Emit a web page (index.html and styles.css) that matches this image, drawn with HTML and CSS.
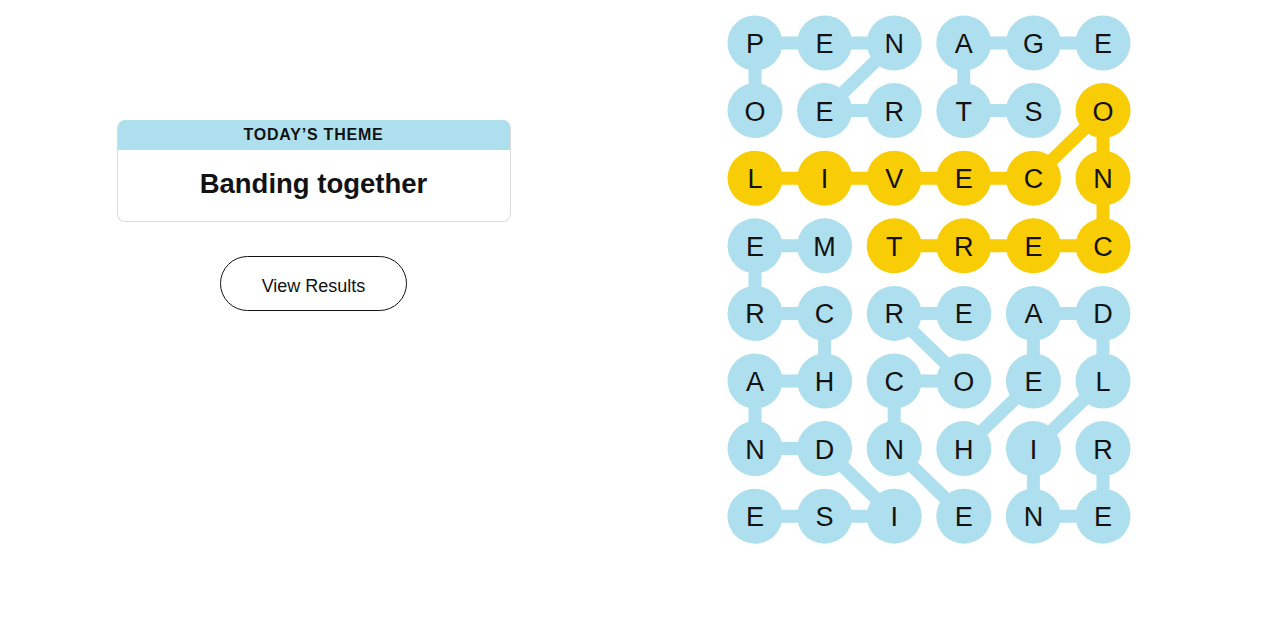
FILE: index.html
```html
<!DOCTYPE html>
<html>
<head>
    <title>Strands</title>
    <link rel="stylesheet" href="styles.css">
</head>
<body>
    <div class="game">
        <div class="sidebar">
            <div class="theme-card">
                <div class="theme-label">Today’s Theme</div>
                <div class="theme-name">Banding together</div>
            </div>
            <button class="results-btn">View Results</button>
        </div>

        <div class="board">
            <svg id="board" width="406" height="532" viewBox="0 0 406 532"></svg>
        </div>
    </div>

    <script>
        const letters = [
            "PENAGE",
            "OERTSO",
            "LIVECN",
            "EMTREC",
            "RCREAD",
            "AHCOEL",
            "NDNHIR",
            "ESIENE"
        ];

        // each word is a path of [col, row] cells
        const words = [
            { found: "theme", cells: [[0,1],[0,0],[1,0],[2,0],[1,1],[2,1]] },           // OPENER
            { found: "theme", cells: [[4,1],[3,1],[3,0],[4,0],[5,0]] },                 // STAGE
            { found: "span", cells: [[0,2],[1,2],[2,2],[3,2],[4,2],[5,1],[5,2],[5,3],[4,3],[3,3],[2,3]] }, // LIVECONCERT
            { found: "theme", cells: [[1,3],[0,3],[0,4],[1,4],[1,5],[0,5],[0,6],[1,6],[2,7],[1,7],[0,7]] }, // MERCHANDISE
            { found: "theme", cells: [[3,4],[2,4],[3,5],[2,5],[2,6],[3,7]] },           // ENCORE
            { found: "theme", cells: [[3,6],[4,5],[4,4],[5,4],[5,5],[4,6],[4,7],[5,7],[5,6]] } // HEADLINER
        ];

        const colX = i => 28 + i * 69.6;
        const rowY = j => 28 + j * 67.6;
        const svg = document.getElementById('board');
        const ns = 'http://www.w3.org/2000/svg';
        const cellState = {};

        words.forEach(function (word) {
            const line = document.createElementNS(ns, 'polyline');
            line.setAttribute('points', word.cells.map(c => colX(c[0]) + ',' + rowY(c[1])).join(' '));
            line.setAttribute('class', 'link ' + word.found);
            svg.appendChild(line);
            word.cells.forEach(c => cellState[c[0] + '-' + c[1]] = word.found);
        });

        letters.forEach(function (row, j) {
            row.split('').forEach(function (ch, i) {
                const dot = document.createElementNS(ns, 'circle');
                dot.setAttribute('cx', colX(i));
                dot.setAttribute('cy', rowY(j));
                dot.setAttribute('r', 27.5);
                dot.setAttribute('class', 'dot ' + (cellState[i + '-' + j] || ''));
                svg.appendChild(dot);

                const txt = document.createElementNS(ns, 'text');
                txt.setAttribute('x', colX(i));
                txt.setAttribute('y', rowY(j) + 10);
                txt.setAttribute('class', 'letter');
                txt.textContent = ch;
                svg.appendChild(txt);
            });
        });
    </script>
</body>
</html>
```

FILE: styles.css
```css
body {
    margin: 0;
    background: #fff;
    font-family: "Liberation Sans", Arial, sans-serif;
    color: #121212;
}

.game {
    display: flex;
}

.sidebar {
    width: 627px;
    display: flex;
    flex-direction: column;
    align-items: center;
    padding-top: 120px;
}

.theme-card {
    width: 392px;
    border: 1px solid #dcdcdc;
    border-top: none;
    border-radius: 8px;
    overflow: hidden;
    text-align: center;
}

.theme-label {
    background: #aedfee;
    height: 30px;
    line-height: 30px;
    font-size: 16px;
    font-weight: bold;
    text-transform: uppercase;
    letter-spacing: 0.8px;
}

.theme-name {
    height: 71px;
    line-height: 68px;
    font-size: 27.5px;
    font-weight: bold;
}

.results-btn {
    margin-top: 34px;
    width: 187px;
    height: 55px;
    padding-top: 6px;
    border: 1px solid #121212;
    border-radius: 28px;
    background: #fff;
    font-family: "Liberation Sans", Arial, sans-serif;
    font-size: 18px;
    color: #121212;
    cursor: pointer;
}

.board {
    margin-left: 100px;
    padding-top: 15px;
}

/* connectors between letters */
.link {
    fill: none;
    stroke-width: 13;
    stroke-linejoin: round;
}

.link.theme {
    stroke: #aedfee;
}

.dot.theme {
    fill: #aedfee;
}

.link.span {
    stroke: #f8cd05;
}

.dot.span {
    fill: #f8cd05;
}

.letter {
    font-family: "Liberation Sans", Arial, sans-serif;
    font-size: 27px;
    fill: #121212;
    text-anchor: middle;
}
```
